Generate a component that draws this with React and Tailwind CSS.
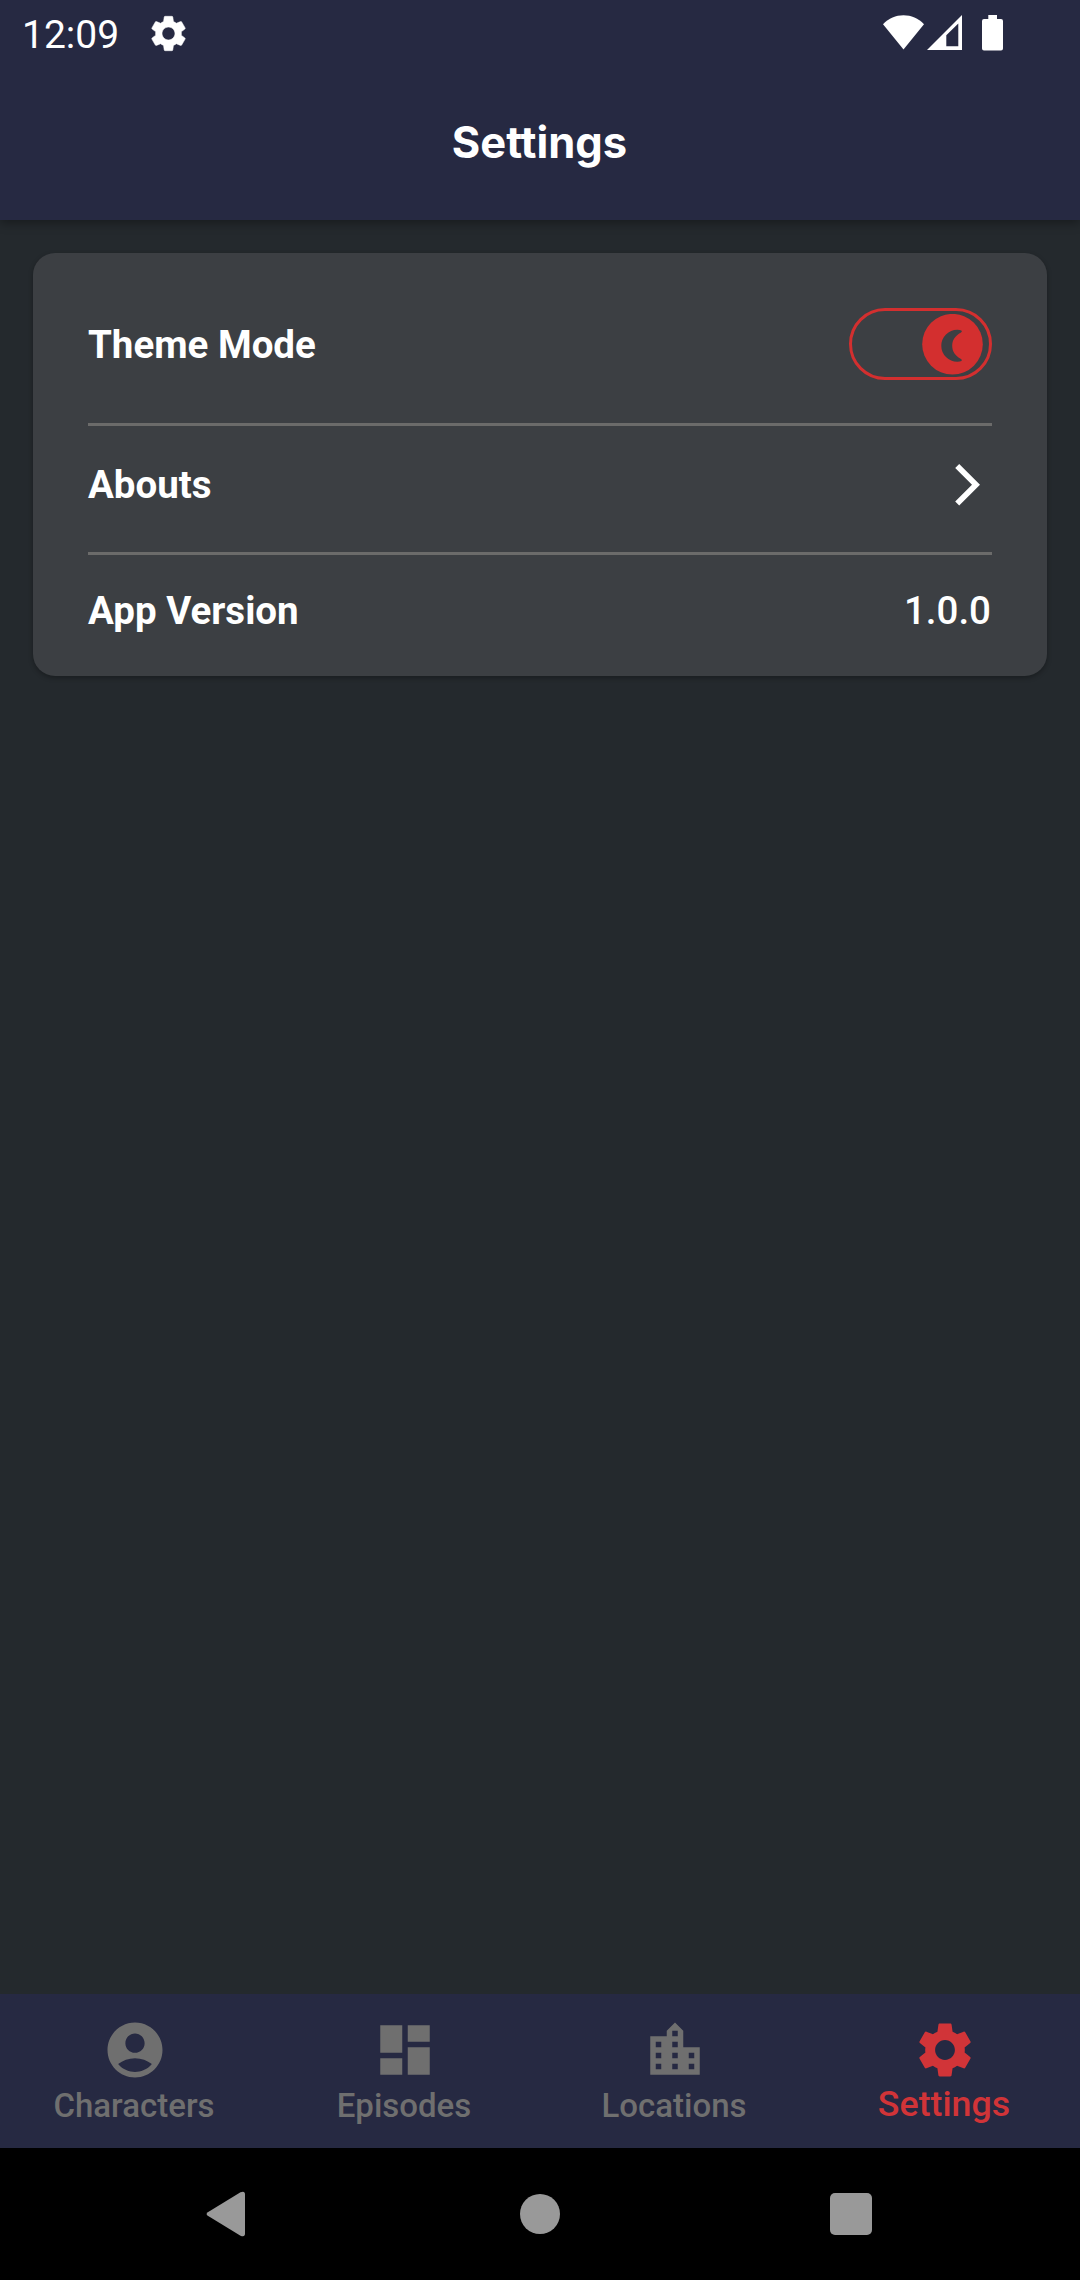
import React from "react";

const GEAR =
  "M19.14 12.94c.04-.3.06-.61.06-.94 0-.32-.02-.64-.07-.94l2.03-1.58c.18-.14.23-.41.12-.61l-1.92-3.32c-.12-.22-.37-.29-.59-.22l-2.39.96c-.5-.38-1.03-.7-1.62-.94L14.4 2.81c-.04-.24-.24-.41-.48-.41h-3.84c-.24 0-.43.17-.47.41L9.25 5.35C8.66 5.59 8.12 5.92 7.63 6.29L5.24 5.33c-.22-.08-.47 0-.59.22L2.74 8.87c-.12.21-.08.47.12.61l2.03 1.58C4.84 11.36 4.8 11.69 4.8 12s.02.64.07.94l-2.03 1.58c-.18.14-.23.41-.12.61l1.92 3.32c.12.22.37.29.59.22l2.39-.96c.5.38 1.03.7 1.62.94l.36 2.54c.05.24.24.41.48.41h3.84c.24 0 .44-.17.47-.41l.36-2.54c.59-.24 1.13-.56 1.62-.94l2.39.96c.22.08.47 0 .59-.22l1.92-3.32c.12-.22.07-.47-.12-.61L19.14 12.94zM12 15.6c-1.98 0-3.6-1.62-3.6-3.6s1.62-3.6 3.6-3.6 3.6 1.62 3.6 3.6-1.62 3.6-3.6 3.6z";

const TABS = [
  {
    label: "Characters",
    path: "M12 2C6.48 2 2 6.48 2 12s4.48 10 10 10 10-4.48 10-10S17.52 2 12 2zm0 4c1.93 0 3.5 1.57 3.5 3.5S13.93 13 12 13s-3.5-1.57-3.5-3.5S10.07 6 12 6zm0 14c-2.03 0-4.43-.82-6.14-2.88C7.55 15.8 9.68 15 12 15s4.45.8 6.14 2.12C16.43 19.18 14.03 20 12 20z",
  },
  { label: "Episodes", path: "M3 13h8V3H3v10zm0 8h8v-6H3v6zm10 0h8V11h-8v10zm0-18v6h8V3h-8z" },
  {
    label: "Locations",
    path: "M15 11V5l-3-3-3 3v2H3v14h18V11h-6zm-8 8H5v-2h2v2zm0-4H5v-2h2v2zm0-4H5V9h2v2zm6 8h-2v-2h2v2zm0-4h-2v-2h2v2zm0-4h-2V9h2v2zm0-4h-2V5h2v2zm6 12h-2v-2h2v2zm0-4h-2v-2h2v2z",
  },
  { label: "Settings", path: GEAR, active: true },
];

function StatusBar() {
  return (
    <div className="flex h-[66px] items-center pl-[22px] pr-[77px] text-white">
      <span className="w-[125px] pt-[3px] text-[39px] leading-[46px]">12:09</span>
      <svg viewBox="0 0 24 24" className="h-[43px] w-[43px]" fill="currentColor" stroke="currentColor" strokeWidth="0.3">
        <path d={GEAR} />
      </svg>
      <div className="ml-auto flex h-9 items-start">
        <svg className="h-9 w-[41px]" viewBox="0 0 41 36" fill="currentColor">
          <path d="M0 9.2C5.8 3.4 12.8.3 20.5.3S35.2 3.4 41 9.2L20.5 34.5z" />
        </svg>
        <svg className="ml-[3px] h-9 w-[35px]" viewBox="0 0 35 36" fill="currentColor" fillRule="evenodd">
          <path d="M0 35L35 0V35zM19.3 20.300V31.200H31.300V8.600z" />
        </svg>
        <svg className="ml-5 h-9 w-[21px]" viewBox="0 0 21 36" fill="currentColor">
          <path d="M6.300 0h8.700v4H19a2 2 0 0 1 2 2V33.500a2 2 0 0 1-2 2H2a2 2 0 0 1-2-2V6a2 2 0 0 1 2-2h4.300z" />
        </svg>
      </div>
    </div>
  );
}

function ThemeSwitch() {
  return (
    <button
      aria-label="Dark theme"
      className="flex h-[72px] w-[143px] items-center justify-end rounded-full border-[3px] border-[#d32f2f] pr-[6.5px]"
    >
      <svg className="h-[61px] w-[61px]" viewBox="0 0.300 61 61">
        <circle cx="30.500" cy="30.500" r="30.300" fill="#d32f2f" />
        <path
          fill="#3c3f43"
          d="M35.300 16A16 16 0 0 0 35.300 48Q38 48 39.400 47.200Q40.600 46.200 39 45.200C33 42 30.200 37.500 30.200 32C30.200 26.500 33 22 39 18.800Q40.600 17.800 39.400 16.800Q38 16 35.300 16Z"
        />
      </svg>
    </button>
  );
}

function Divider({ className }) {
  return <div className={`h-[3px] bg-[#6b6b6a] ${className}`} />;
}

export default function App() {
  return (
    <div className="flex h-[2280px] w-[1080px] flex-col bg-[#24292d] font-[Roboto,sans-serif]">
      <header className="h-[220px] bg-[#262942] shadow-[0_3px_10px_rgba(0,0,0,0.35)]">
        <StatusBar />
        <h1 className="pr-px pt-[50px] text-center font-[Inter,sans-serif] text-[43.5px] font-bold leading-[52px] text-white">
          Settings
        </h1>
      </header>

      <main className="flex-1 px-[33px] pt-[33px]">
        <section className="h-[423px] rounded-[22px] bg-[#3c3f43] px-[55px] pt-[55px] text-[38.5px] font-bold leading-[46px] text-white shadow-[0_2px_5px_rgba(0,0,0,0.3)]">
          <div className="flex h-[72px] items-center justify-between">
            <span className="pt-[2px]">Theme Mode</span>
            <ThemeSwitch />
          </div>
          <Divider className="mt-[43px]" />
          <div className="flex h-[117px] items-center justify-between">
            <span>Abouts</span>
            <svg className="mr-3 h-[42px] w-[25px]" viewBox="0 0.300 25 42" fill="white">
              <path d="M4.200.3L25 21 4.200 41.700.2 37.700 17 21 .2 4.300z" />
            </svg>
          </div>
          <Divider className="mt-[9px]" />
          <div className="flex h-[111px] items-center justify-between">
            <span>App Version</span>
            <span className="pr-px font-medium">1.0.0</span>
          </div>
        </section>
      </main>

      <nav className="grid h-[154px] grid-cols-4 bg-[#262942]">
        {TABS.map(({ label, path, active }) => (
          <div
            key={label}
            className={`flex flex-col items-center pt-[23px] font-medium ${active ? "text-[#d13438]" : "text-[#6f6f6f]"}`}
          >
            <svg viewBox="0 0 24 24" className="h-[66px] w-[66px]" fill="currentColor">
              <path d={path} />
            </svg>
            <span className={`pr-[2px] leading-10 ${active ? "mt-px text-[35.75px]" : "mt-[3px] text-[33px]"}`}>
              {label}
            </span>
          </div>
        ))}
      </nav>

      <div className="flex h-[132px] items-center bg-black pl-[206px] text-[#999999]">
        <svg className="h-[46px] w-10" viewBox="0 0 40 46" fill="currentColor">
          <path d="M1.800 21.200L34.500 1.200Q39 -.6 39 3.400V42.600Q39 46.600 34.500 44.800L1.800 24.800Q-.6 23 1.800 21.200z" />
        </svg>
        <div className="ml-[274px] h-10 w-10 rounded-full bg-[#999999]" />
        <div className="ml-[270px] h-[42px] w-[41.5px] rounded-[5px] bg-[#999999]" />
      </div>
    </div>
  );
}
